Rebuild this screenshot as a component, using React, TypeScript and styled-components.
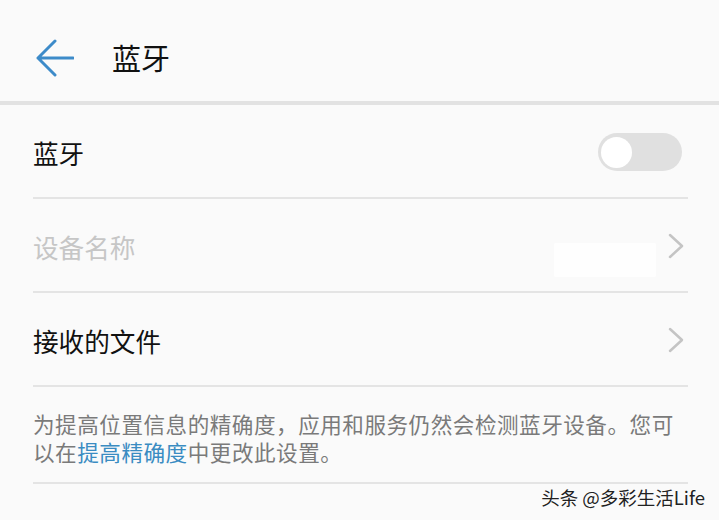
import styled, { createGlobalStyle } from "styled-components";

const GlobalStyle = createGlobalStyle`
  html, body {
    margin: 0;
    padding: 0;
    background: #fafafa;
  }
  body {
    font-family: "Noto Sans CJK SC", "Noto Sans", sans-serif;
  }
`;

const rows = [
  { label: "蓝牙", kind: "switch" as const },
  { label: "设备名称", kind: "link" as const, disabled: true, masked: true },
  { label: "接收的文件", kind: "link" as const },
];

const BackArrow = () => (
  <svg width="38" height="38" viewBox="0 0 38 38">
    <path
      d="M37 19 H2 M19 2 L2 19 L19 36"
      fill="none"
      stroke="#3d8bc9"
      strokeWidth="3"
      strokeLinecap="round"
      strokeLinejoin="round"
    />
  </svg>
);

const Chevron = () => (
  <svg width="16" height="26" viewBox="0 0 16 26">
    <path
      d="M2 2 L14 13 L2 24"
      fill="none"
      stroke="#c4c4c4"
      strokeWidth="2.5"
      strokeLinecap="round"
      strokeLinejoin="round"
    />
  </svg>
);

const App = () => {
  return (
    <Page>
      <GlobalStyle />
      <Header>
        <BackButton>
          <BackArrow />
        </BackButton>
        <Title>蓝牙</Title>
      </Header>

      <List>
        {rows.map(row => (
          <Row key={row.label}>
            <Label $disabled={row.disabled}>{row.label}</Label>
            {row.kind === "switch" ? (
              <Switch>
                <Knob />
              </Switch>
            ) : (
              <RowEnd>
                {row.masked && <Mask />}
                <Chevron />
              </RowEnd>
            )}
          </Row>
        ))}
        <Note>
          <NoteText>
            为提高位置信息的精确度，应用和服务仍然会检测蓝牙设备。您可
            <br />
            以在<NoteLink>提高精确度</NoteLink>中更改此设置。
          </NoteText>
        </Note>
      </List>

      <Watermark>头条 @多彩生活Life</Watermark>
    </Page>
  );
};

export default App;

const Page = styled.div`
  width: 719px;
  height: 520px;
  overflow: hidden;
  background: #fafafa;
  display: flex;
  flex-direction: column;
`;

const Header = styled.div`
  height: 87px;
  padding-top: 14px;
  border-bottom: 4px solid #e2e2e2;
  display: flex;
  align-items: center;
  padding-left: 36px;
  gap: 38px;
`;

const BackButton = styled.div`
  width: 38px;
  height: 38px;
  display: flex;
`;

const Title = styled.div`
  font-size: 29px;
  color: #111;
  line-height: 1;
`;

const List = styled.div`
  padding: 0 31px 0 33px;
  display: flex;
  flex-direction: column;
`;

const Row = styled.div`
  height: 92px;
  border-bottom: 2px solid #e4e4e4;
  display: flex;
  align-items: center;
  justify-content: space-between;
`;

const Label = styled.div<{ $disabled?: boolean }>`
  font-size: 25.6px;
  color: ${p => (p.$disabled ? "#c6c6c6" : "#111")};
  margin-top: 2px;
`;

const Switch = styled.div`
  width: 84px;
  height: 38px;
  border-radius: 19px;
  background: #e0e0e0;
  display: flex;
  align-items: center;
  padding-left: 3px;
  box-sizing: border-box;
  margin-right: 6px;
  margin-top: 2px;
`;

const Knob = styled.div`
  width: 31px;
  height: 31px;
  border-radius: 50%;
  background: #ffffff;
`;

const RowEnd = styled.div`
  display: flex;
  align-items: center;
  gap: 12px;
  margin-right: 4px;
  margin-top: 2px;
`;

const Mask = styled.div`
  width: 102px;
  height: 34px;
  background: #fefefe;
  margin-top: 28px;
  border-radius: 2px;
`;

const Note = styled.div`
  padding: 23px 0 16px;
  border-bottom: 2px solid #e4e4e4;
`;

const NoteText = styled.p`
  margin: 0;
  font-size: 21.6px;
  letter-spacing: 0.5px;
  line-height: 28px;
  color: #7a7a7a;
  white-space: nowrap;
`;

const NoteLink = styled.span`
  color: #3a8cc2;
`;

const Watermark = styled.div`
  align-self: flex-end;
  margin-right: 14px;
  margin-top: 1px;
  font-size: 18.5px;
  line-height: 24px;
  color: #222;
  text-shadow: 0 0 2px #fff;
`;
